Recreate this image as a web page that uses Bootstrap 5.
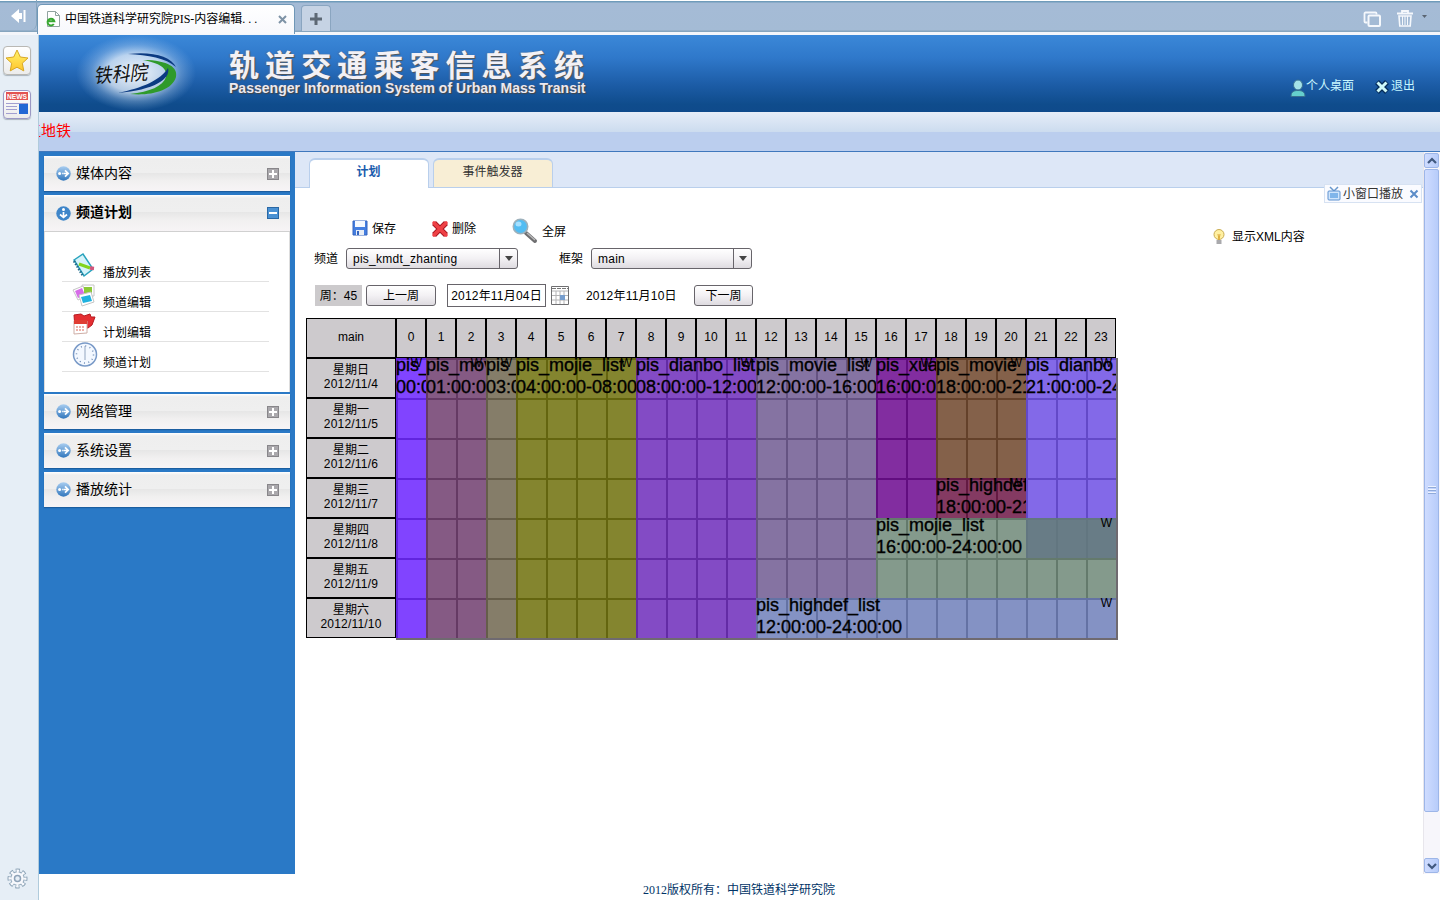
<!DOCTYPE html>
<html lang="zh-CN">
<head>
<meta charset="utf-8">
<title>中国铁道科学研究院PIS-内容编辑</title>
<link rel="stylesheet" href="https://cdn.jsdelivr.net/npm/bootstrap@5.3.0/dist/css/bootstrap.min.css">
<style>
body{font:12px/14px "Liberation Sans","Noto Sans CJK SC",sans-serif;color:#000;background:#fff;width:1440px;height:900px;overflow:hidden}
svg{display:block;flex:none}
.song{font-family:"Liberation Serif","Noto Sans CJK SC",serif}
.topbar{height:35px;flex:none;background:linear-gradient(#fff 0 1px,#6f9bba 1px 2px,#a5bbd6 3px,#a4bbd5 30px,#86a5be 31px,#86a5be 32px,#f4f6fa 32px)}
.backbtn{width:37px;height:30px;border-radius:0 0 6px 0;border-right:1px solid #86a5be;padding:7px 0 0 10px}
.page-tab{width:258px;height:30px;margin-top:4px;background:linear-gradient(#fff,#f7f8fc);border:1px solid #6f97b7;border-bottom:0;border-radius:5px 5px 0 0;padding:0 6px 1px 8px}
.newtab{width:30px;height:26px;margin:5px 0 0 6px;background:#c6d3e4;border:1px solid #8aa5c0;border-bottom:0;border-radius:4px 4px 0 0}
.siderail{width:39px;background:#e6eef6;border-right:1px solid #b0cbdc;padding:11px 0 11px 3px}
.railbtn{width:28px;height:29px;border:1px solid #b9b8b4;border-radius:4px;background:linear-gradient(#fff,#ececec);box-shadow:0 1px 1px #a9b3bd}
.railbtn.news{margin-top:15px;border-color:#9b98c4}
.banner{height:77px;background:linear-gradient(#3b88d8,#2f78ca 30%,#1c5ca6 65%,#0f4c8c 90%,#0f4a8b);flex:none}
.ttl{font-size:30px;line-height:32px;font-weight:700;letter-spacing:6.1px;color:#f3f1f5;text-shadow:1px 1px 1px #555,-1px 0 1px #54678a;white-space:nowrap}
.subttl{font-size:14px;line-height:14px;font-weight:700;letter-spacing:.02px;color:#ece9f0;text-shadow:1px 1px 1px #444,-1px 0 1px #4c6389;white-space:nowrap;margin-top:-1px}
.toplinks{color:#c8f7ff;padding:42px 25px 0 0}
.strip{height:40px;flex:none;background:linear-gradient(#e6edf8,#ccdcef 20px,#bbceee 20px);border-bottom:1px solid #3f78bd;overflow:hidden;color:#f00;font-size:15px;line-height:18px;padding-top:10px}
.strip div{margin-left:-13px}
.sidemenu{width:256px;background:#2a79c6;padding:4px 5px 0}
.mhead{height:35px;background:linear-gradient(#fff,#eee 3px,#efefef 17px,#e6e6e6 17px,#f1f0f0 25px,#f7f4f6);box-shadow:0 1px 1px #1c5ea0;font-size:14px;padding:0 11px 0 12px;margin-bottom:4px}
.mhead.opened{margin-bottom:0;height:37px;border-bottom:1px solid #d0d0d0;box-shadow:none;font-weight:700}
.mhead span{line-height:20px;margin:-2px auto 0 5px}
.mbody{height:160px;background:#fff;padding:20px 20px 0 17px;margin-bottom:2px;border:solid #ddd;border-width:0 1px}
.mitem{height:30px;border-bottom:1px solid #e2e2e2;padding-left:10px}
.mitem svg{margin:0 5px 0 -1px}
.mitem span{padding-top:14px}
.tabstrip{height:36px;background:#dde7f7;border-bottom:1px solid #b9cfec;padding:6px 0 0 14px;position:relative;flex:none}
.ptab{width:120px;height:30px;border:1px solid #b9cfec;border-width:2px 1px 0;border-radius:6px 6px 0 0;text-align:center;line-height:24px;margin-right:4px;color:#333;padding-right:1px}
.ptab.on{background:#fff;color:#1a5cad;font-weight:700}
.ptab.off{background:#f8eed5;height:29px}
.mini{position:absolute;right:1px;top:32px;width:98px;height:19px;background:#fafbff;border:1px solid #d7e2f2;color:#333;padding:0 2px 0 2px}
.scr{width:17px;background:#f7f6fb;border-left:1px solid #e8e6ec;padding:1px 1px 1px 0}
.scr .sq,.thumb{border:1px solid #9db6e8;background:linear-gradient(90deg,#cfdcff,#b7ccfa);border-radius:2px}
.scr .sq{height:15px}
.thumb{height:643px;margin-top:1px}
.btnx,.selx{height:21px;border:1px solid #67646a;border-radius:3px;background:linear-gradient(#fff,#f3f1f4 50%,#dedbe0);text-align:center;line-height:21px}
.selx{text-align:left;letter-spacing:.25px;padding-left:6px;line-height:20px}
.selx i{width:18px;border-left:1px solid #67646a}
.wk{background:#cccacc;width:47px;height:21px;line-height:22px;text-align:center}
.dt{letter-spacing:.2px}
.inputx{width:99px;height:23px;border:1px solid #67646a;line-height:22px;text-align:center}
.tbl{display:grid;grid-template-columns:90px 722px;grid-template-rows:40px 282px;width:812px}
.hcell{border:1px solid #000;background:#cdcacd;height:40px;display:flex;align-items:center;justify-content:center;text-align:center;flex:none;padding-bottom:2px}
.hour{width:30px}
.sched{display:grid;grid-template-columns:repeat(24,30px);grid-template-rows:repeat(7,40px);border:solid #6f6a70;border-width:0 2px 2px 0}
.blk{position:relative;overflow:hidden;font-size:18px;line-height:22px;white-space:nowrap;-webkit-text-stroke:.35px #000;
background-image:linear-gradient(90deg,var(--ln) 2px,transparent 2px),linear-gradient(var(--ln) 2px,transparent 2px);background-size:30px 40px}
.blk div{margin-top:-4px}
.blk b{position:absolute;right:4px;top:-2px;font:12px/14px "Liberation Sans",sans-serif;-webkit-text-stroke:0}
.foot{height:26px;flex:none;text-align:center;color:#036;padding:9px 1px 0 0}
</style>
</head>
<body class="d-flex flex-column">
<svg width="0" height="0" class="position-absolute"><defs>
<linearGradient id="gb" x2="0" y2="1"><stop stop-color="#a8cdf0"/><stop offset="1" stop-color="#3277bd"/></linearGradient>
<radialGradient id="glow"><stop stop-color="#fff" stop-opacity=".95"/><stop offset=".5" stop-color="#e8f1fb" stop-opacity=".75"/><stop offset=".75" stop-color="#c5dcf5" stop-opacity=".3"/><stop offset="1" stop-color="#9cc4ee" stop-opacity="0"/></radialGradient>
<linearGradient id="gs" x2="0" y2="1"><stop stop-color="#fff36b"/><stop offset="1" stop-color="#ffc52c"/></linearGradient>
<g id="arr"><circle cx="7.5" cy="7.5" r="7.2" fill="url(#gb)"/><circle cx="3.600" cy="7.500" r="1.500" fill="#fff"/><path d="M6.200 7.500h1M7.500 7.500h4.500M9 4.300l3.200 3.200L9 10.700" stroke="#fff" stroke-width="1.700" fill="none"/></g>
<g id="plus"><rect x=".5" y=".5" width="11" height="11" fill="#aaa8ac" stroke="#88868a"/><path d="M6 2v8M2 6h8" stroke="#fff" stroke-width="2"/></g>
</defs></svg>

<header class="topbar d-flex">
  <div class="backbtn"><svg width="17" height="18"><path d="M1 9l8-7v4h3v6H9v4z" fill="#fff"/><path d="M14.5 3v12" stroke="#fff" stroke-width="2"/></svg></div>
  <div class="page-tab d-flex align-items-center song">
    <svg width="15" height="16"><path d="M1.5.5h8l4 4v11h-12z" fill="#fff" stroke="#91a3a0"/><path d="M9.5.5v4h4" fill="none" stroke="#91a3a0"/><path d="M7.800 13A3.400 3.400 0 1 1 8.300 10.300H2" fill="none" stroke="#38a832" stroke-width="2"/></svg>
    <span class="ms-1 text-nowrap">中国铁道科学研究院PIS-内容编辑<span style="letter-spacing:3px">...</span></span>
    <svg class="ms-auto" width="11" height="11"><path d="M2 2l7 7M9 2L2 9" stroke="#7e93a6" stroke-width="2"/></svg>
  </div>
  <div class="newtab d-flex align-items-center justify-content-center"><svg width="14" height="14"><path d="M7 1v12M1 7h12" stroke="#5d6874" stroke-width="3"/></svg></div>
  <div class="ms-auto d-flex" style="padding:10px 7px 0 0">
    <svg width="70" height="18"><path d="M4.500 12.500h-2a1 1 0 0 1-1-1v-8a1 1 0 0 1 1-1h10a1 1 0 0 1 1 1v1" fill="none" stroke="#f5f8fc" stroke-width="1.800"/><rect x="5.500" y="5.500" width="11.500" height="10.500" rx="1" fill="#a4bbd5" stroke="#f5f8fc" stroke-width="2"/><path d="M34 3.500h16M39 3V1h6v2" stroke="#f5f8fc" stroke-width="1.800" fill="none"/><path d="M36 6h12l-.8 10H36.800z" fill="none" stroke="#f5f8fc" stroke-width="1.600"/><path d="M39.500 6v9M42 6v9M44.500 6v9" stroke="#f5f8fc"/><path d="M59 5h5l-2.500 3z" fill="#5a6572"/></svg>
  </div>
</header>

<div class="d-flex flex-grow-1" style="min-height:0">
  <aside class="siderail d-flex flex-column flex-shrink-0">
    <div class="railbtn d-flex align-items-center justify-content-center"><svg width="24" height="24"><path d="M12 1l3.300 7 7.700 1-5.700 5.200 1.500 7.700L12 18.200l-6.800 3.700 1.500-7.700L1 9l7.700-1z" fill="url(#gs)" stroke="#d8a824"/></svg></div>
    <div class="railbtn news overflow-hidden"><svg width="26" height="27"><path d="M2 1h22v8H2z" fill="#e35352"/><text x="3" y="8" font-size="7.500" font-weight="700" fill="#fff" textLength="20" lengthAdjust="spacingAndGlyphs">NEWS</text><path d="M2 12.500h22M2 15.500h11M2 18.500h11M2 22.500h11" stroke="#a29fd0"/><path d="M15 13h9v10h-9z" fill="#2368d4"/></svg></div>
    <svg class="mt-auto" style="margin-left:4px" width="21" height="21" viewBox="0 0 21 21"><g fill="none"><circle cx="10.500" cy="10.500" r="8" stroke="#8da4b7" stroke-width="4" stroke-dasharray="3.900 2.383" stroke-dashoffset="1.950"/><circle cx="10.500" cy="10.500" r="7.200" fill="#8da4b7"/><circle cx="10.500" cy="10.500" r="7.400" stroke="#f8f9fd" stroke-width="3.200" stroke-dasharray="2.400 3.412" stroke-dashoffset="1.200"/></g><circle cx="10.500" cy="10.500" r="6.200" fill="#f8f9fd"/><circle cx="10.500" cy="10.500" r="3" fill="#e6eef6" stroke="#8fa3b8" stroke-width="1.500"/></svg>
  </aside>

  <main class="flex-grow-1 d-flex flex-column" style="min-width:0">
    <div class="banner d-flex">
      <svg width="190" height="77"><ellipse cx="97" cy="38" rx="60" ry="38" fill="url(#glow)"/>
        <text transform="translate(55 48) skewX(-12) rotate(-4)" font-size="20" textLength="53" lengthAdjust="spacingAndGlyphs" fill="#111">铁科院</text>
        <path d="M89 19c23-3 43 2 48 13-10-9-28-12-48-13z" fill="#0b3a82"/><path d="M104 25c26 0 35 8 33 17-4 14-26 19-46 17 20-2 33-8 36-17 2-9-7-14-23-17z" fill="#2f9a2b"/><path d="M129 33c3 11-14 22-50 25 24-5 43-13 50-25z" fill="#0b3a82"/>
      </svg>
      <div style="padding-top:15px"><div class="ttl">轨道交通乘客信息系统</div><div class="subttl">Passenger Information System of Urban Mass Transit</div></div>
      <div class="toplinks ms-auto d-flex align-items-start">
        <svg width="16" height="20"><ellipse cx="8" cy="8" rx="4.500" ry="5" fill="#a4e2e8" stroke="#386f90"/><path d="M1 19.500c0-5 3-6 7-6s7 1 7 6z" fill="#65cfcd" stroke="#386f90"/></svg><span style="padding-top:2px">个人桌面</span>
        <svg width="16" height="16" style="margin:2px 1px 0 20px"><path d="M3 3l10 10M13 3L3 13" stroke="#052c59" stroke-width="5.500"/><path d="M3.500 3.500l9 9M12.500 3.500l-9 9" stroke="#cff9fa" stroke-width="3"/></svg><span style="padding-top:2px">退出</span>
      </div>
    </div>
    <div class="strip"><div>江地铁</div></div>

    <div class="d-flex flex-grow-1" style="min-height:0">
      <nav class="sidemenu flex-shrink-0">
        <div class="mhead d-flex align-items-center"><svg width="15" height="15"><use href="#arr"/></svg><span>媒体内容</span><svg width="12" height="12"><use href="#plus"/></svg></div>
        <div class="mhead opened d-flex align-items-center"><svg width="15" height="15"><circle cx="7.500" cy="7.500" r="7.200" fill="#3f86c9"/><circle cx="7.500" cy="3.500" r="1.500" fill="#fff"/><path d="M7.500 6v6M4 8.500l3.500 3 3.500-3" stroke="#fff" stroke-width="1.700" fill="none"/></svg><span>频道计划</span><svg width="12" height="12"><rect x=".5" y=".5" width="11" height="11" fill="#4a91d3" stroke="#2a68a5"/><path d="M2 6h8" stroke="#fff" stroke-width="2"/></svg></div>
        <div class="mbody">
          <div class="mitem d-flex"><svg width="27" height="28"><path d="M3 8l9-6 10 15-9 7z" fill="#d6f3fa" stroke="#29a3bd" stroke-width="1.500"/><path d="M3 9l9 15" stroke="#236b8c" stroke-width="2.500" stroke-dasharray="1.500 1.500"/><path d="M8 12l11 4" stroke="#82d51b" stroke-width="3"/><path d="M19 16l4 .5" stroke="#d2557b" stroke-width="3.500"/></svg><span>播放列表</span></div>
          <div class="mitem d-flex"><svg width="27" height="28"><g stroke="#c6c6c6"><path d="M11 3h12v11H11z" fill="#fff"/><path d="M2 8l10-4 4 10-9 4z" fill="#fff"/></g><path d="M13 5h8v7h-8z" fill="#8bc936"/><path d="M4 9l7-3 3 7-7 3z" fill="#d66ce8"/><path d="M8 13l12-3 3 10-12 4z" fill="#fff" stroke="#c6c6c6"/><path d="M10 15l9-2 2 6-9 2z" fill="#20b2df"/></svg><span>频道编辑</span></div>
          <div class="mitem d-flex"><svg width="27" height="28"><path d="M3 3l7-1 3 2 6-2 1 3h4l-3 8-4 3H4z" fill="#e52e32" stroke="#b71a20"/><path d="M3 9h13v12l-13 1z" fill="#fff" stroke="#cfaea6"/><path d="M3 8h13v4H3z" fill="#df3d32"/><path d="M5 15h9M5 18h9" stroke="#e7988d" stroke-width="1.500" stroke-dasharray="2 1"/></svg><span>计划编辑</span></div>
          <div class="mitem d-flex"><svg width="27" height="28"><circle cx="14" cy="12.500" r="11.500" fill="#f3f8ff" stroke="#7899c7" stroke-width="1.500"/><circle cx="14" cy="12.500" r="8.500" fill="none" stroke="#6c8ab4" stroke-width="1.500" stroke-dasharray="1 3.450"/><path d="M14 4v14" stroke="#92a5bf"/></svg><span>频道计划</span></div>
        </div>
        <div class="mhead d-flex align-items-center"><svg width="15" height="15"><use href="#arr"/></svg><span>网络管理</span><svg width="12" height="12"><use href="#plus"/></svg></div>
        <div class="mhead d-flex align-items-center"><svg width="15" height="15"><use href="#arr"/></svg><span>系统设置</span><svg width="12" height="12"><use href="#plus"/></svg></div>
        <div class="mhead d-flex align-items-center"><svg width="15" height="15"><use href="#arr"/></svg><span>播放统计</span><svg width="12" height="12"><use href="#plus"/></svg></div>
      </nav>

      <section class="flex-grow-1" style="min-width:0">
        <div class="tabstrip d-flex">
          <div class="ptab on">计划</div><div class="ptab off">事件触发器</div>
          <div class="mini d-flex align-items-center"><svg width="14" height="15"><path d="M3 1l4 4 4-4" fill="none" stroke="#6797cc" stroke-width="1.500"/><rect x="1" y="5" width="12" height="9" rx="1" fill="#d0e5fc" stroke="#5c91cf"/><path d="M3 7h8v5H3z" fill="#80b5ea"/></svg><span style="margin-left:2px">小窗口播放</span><svg class="ms-auto" width="10" height="10"><path d="M1.500 1.500l7 7M8.500 1.500l-7 7" stroke="#5b8cc8" stroke-width="2"/></svg></div>
        </div>
        <div style="padding:29px 0 0 11px">
          <div class="d-flex align-items-start" style="height:31px;padding-left:46px">
            <svg width="16" height="16" style="margin-top:3px"><path d="M1 1h14v14H1z" fill="#447ee0" stroke="#3565bf"/><path d="M3 1h10v6H3z" fill="#f5f9ff"/><path d="M4 10h8v5H4z" fill="#e8eef6"/><path d="M5 11h2v4H5z" fill="#3565bf"/></svg><span style="margin:5px 0 0 4px">保存</span>
            <svg width="18" height="18" style="margin:3px 0 0 35px"><path d="M3 3l12 12M15 3L3 15" stroke="#a91621" stroke-width="5.500"/><path d="M3 3l12 12M15 3L3 15" stroke="#ef4146" stroke-width="3.600" stroke-linecap="round"/></svg><span style="margin:5px 0 0 3px">删除</span>
            <svg width="26" height="26" style="margin:1px 0 0 36px"><path d="M14 15l9 8" stroke="#6e6e70" stroke-width="4" stroke-linecap="round"/><path d="M15 15l8 7" stroke="#b9b9b9" stroke-width="1.500"/><circle cx="8.500" cy="8.500" r="7.200" fill="#52bdf3" stroke="#9db1bc" stroke-width="1.600"/><ellipse cx="6.500" cy="6" rx="3" ry="2.500" fill="#a5e0ff"/></svg><span style="margin:8px 0 0 4px">全屏</span>
            <svg width="14" height="18" style="margin:11px 0 0 646px"><circle cx="7" cy="6.500" r="5" fill="#fff0a1" stroke="#c9ac52"/><path d="M6 6l1 6 1-6" stroke="#dcaa39" fill="none"/><path d="M4.500 12h5v4h-5z" fill="#a9a9ac"/></svg><span style="margin:13px 0 0 6px">显示XML内容</span>
          </div>
          <div class="d-flex align-items-center" style="padding-left:8px;height:21px"><span>频道</span>
            <div class="selx d-flex justify-content-between" style="width:172px;margin-left:8px"><span>pis_kmdt_zhanting</span><i class="d-flex align-items-center justify-content-center"><svg width="8" height="5"><path d="M0 0h8L4 5z" fill="#444"/></svg></i></div>
            <span style="margin-left:41px">框架</span>
            <div class="selx d-flex justify-content-between" style="width:161px;margin-left:8px"><span>main</span><i class="d-flex align-items-center justify-content-center"><svg width="8" height="5"><path d="M0 0h8L4 5z" fill="#444"/></svg></i></div>
          </div>
          <div class="d-flex align-items-center" style="padding-left:9px;height:23px;margin-top:15px">
            <div class="wk">周：45</div><div class="btnx" style="width:70px;margin-left:4px">上一周</div><div class="inputx dt" style="margin-left:11px">2012年11月04日</div>
            <svg width="18" height="19" style="margin:0 17px 0 5px"><path d="M.5.500h17v18H.5z" fill="#fff" stroke="#6f6f71"/><path d="M1 2.500h16" stroke="#777" stroke-dasharray="4 1"/><path d="M1 5h16M1 9.500h16M1 14h16M5 5v13M9 5v13M13 5v13" stroke="#b4b4b6"/><path d="M9 9h5v5H9z" fill="#779ece"/></svg>
            <span class="dt">2012年11月10日</span><div class="btnx" style="width:59px;margin-left:auto;margin-right:670px">下一周</div>
          </div>
          <div class="tbl" style="margin-top:11px">
            <div class="hcell">main</div><div class="d-flex" id="hours"></div>
            <div id="days"></div>
            <div class="sched" id="sched"></div>
          </div>
        </div>
      </section>
      <div class="scr d-flex flex-column flex-shrink-0">
        <div class="sq d-flex align-items-center justify-content-center"><svg width="10" height="8"><path d="M1 6l4-4 4 4" fill="none" stroke="#41597f" stroke-width="2.200"/></svg></div>
        <div class="thumb d-flex align-items-center justify-content-center"><svg width="8" height="9"><path d="M0 .5h8M0 3.500h8M0 6.500h8" stroke="#eef3ff"/><path d="M0 1.500h8M0 4.500h8M0 7.500h8" stroke="#8faada"/></svg></div>
        <div class="sq mt-auto d-flex align-items-center justify-content-center"><svg width="10" height="8"><path d="M1 2l4 4 4-4" fill="none" stroke="#41597f" stroke-width="2.200"/></svg></div>
      </div>
    </div>
    <footer class="foot song">2012版权所有：中国铁道科学研究院</footer>
  </main>
</div>

<script src="https://cdn.jsdelivr.net/npm/bootstrap@5.3.0/dist/js/bootstrap.bundle.min.js"></script>
<script>
const hours = document.getElementById('hours');
for (let h = 0; h < 24; h++) hours.insertAdjacentHTML('beforeend', `<div class="hcell hour">${h}</div>`);
'日一二三四五六'.split('').forEach((d, i) =>
  document.getElementById('days').insertAdjacentHTML('beforeend', `<div class="hcell dt">星期${d}<br>2012/11/${i + 4}</div>`));
// first hour, last hour, first day, last day, colour, list, time
const plan = [
  [0, 1, 0, 7, '#8144ff', 'pis_dianbo_list', '00:00:00-01:00:00'],
  [1, 3, 0, 7, '#855a84', 'pis_movie_list', '01:00:00-03:00:00'],
  [3, 4, 0, 7, '#857d69', 'pis_xuanchuan', '03:00:00-04:00:00'],
  [4, 8, 0, 7, '#84852f', 'pis_mojie_list', '04:00:00-08:00:00'],
  [8, 12, 0, 7, '#834bc5', 'pis_dianbo_list', '08:00:00-12:00:00'],
  [12, 16, 0, 6, '#8573a2', 'pis_movie_list', '12:00:00-16:00:00'],
  [16, 18, 0, 4, '#822da0', 'pis_xuanchuan', '16:00:00-18:00:00'],
  [18, 21, 0, 3, '#84614a', 'pis_movie_list', '18:00:00-21:00:00'],
  [21, 24, 0, 4, '#8369e8', 'pis_dianbo_list', '21:00:00-24:00:00'],
  [18, 21, 3, 4, '#843a62', 'pis_highdef_list', '18:00:00-21:00:00'],
  [16, 24, 4, 6, '#849a8c', 'pis_mojie_list', '16:00:00-24:00:00'],
  [21, 24, 4, 5, '#687c86', '', ''],
  [12, 24, 6, 7, '#8492c4', 'pis_highdef_list', '12:00:00-24:00:00']
];
// grid lines are a darker tone of the block they cross
const darker = (hex, d) => 'rgb(' + [1, 3, 5].map(i => Math.max(0, parseInt(hex.substr(i, 2), 16) - d)).join(',') + ')';
document.getElementById('sched').innerHTML = plan.map(([a, b, c, d, col, n, t]) =>
  `<div class="blk" style="grid-area:${c + 1}/${a + 1}/${d + 1}/${b + 1};background-color:${col};--ln:${darker(col, n ? 32 : 6)}"><div>${n}<br>${t}</div>${a === 16 && c === 4 ? '' : '<b>W</b>'}</div>`).join('');
</script>
</body>
</html>
